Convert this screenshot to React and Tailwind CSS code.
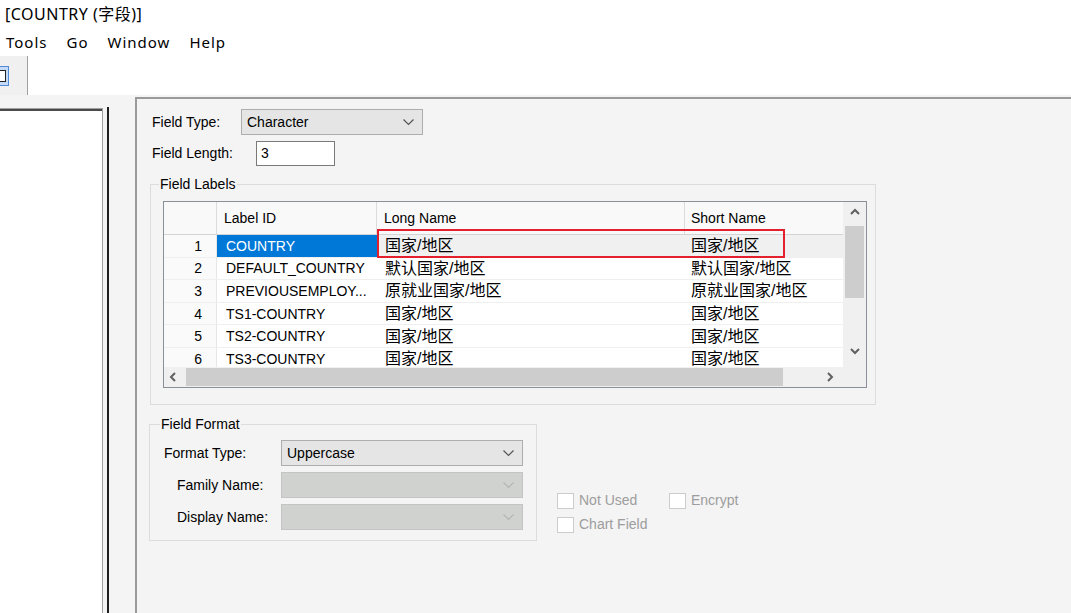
import React from 'react';

const rows = [
  { n: 1, id: 'COUNTRY', long: '国家/地区', short: '国家/地区' },
  { n: 2, id: 'DEFAULT_COUNTRY', long: '默认国家/地区', short: '默认国家/地区' },
  { n: 3, id: 'PREVIOUSEMPLOY...', long: '原就业国家/地区', short: '原就业国家/地区' },
  { n: 4, id: 'TS1-COUNTRY', long: '国家/地区', short: '国家/地区' },
  { n: 5, id: 'TS2-COUNTRY', long: '国家/地区', short: '国家/地区' },
  { n: 6, id: 'TS3-COUNTRY', long: '国家/地区', short: '国家/地区' },
];

function Chevron({ color = '#555555' }) {
  return (
    <svg width="11" height="7" viewBox="0 0 11 7">
      <polyline points="0.5,0.5 5.5,5.5 10.5,0.5" fill="none" stroke={color} strokeWidth="1.2" />
    </svg>
  );
}

// scrollbar arrow, dir: up | down | left | right
function Arrow({ dir }) {
  const pts = {
    up: '1,6 5,2 9,6',
    down: '1,2 5,6 9,2',
    left: '6,1 2,5 6,9',
    right: '3,1 7,5 3,9',
  }[dir];
  return (
    <svg width="10" height="10" viewBox="0 0 10 10">
      <polyline points={pts} fill="none" stroke="#606060" strokeWidth="2" />
    </svg>
  );
}

function Select({ value, width, disabled }) {
  return (
    <div
      className={`h-[26px] flex items-center justify-between pl-[5px] pr-[8px] border ${
        disabled ? 'bg-[#d0d2d0] border-[#c4c4c4]' : 'bg-[#e5e5e5] border-[#adadad]'
      }`}
      style={{ width }}
    >
      <span>{value}</span>
      <Chevron color={disabled ? '#b4b4b4' : '#555555'} />
    </div>
  );
}

function Checkbox({ label }) {
  return (
    <div className="flex items-center h-[17px]">
      <div className="w-[17px] h-[16px] bg-white border border-[#cccccc]" />
      <span className="ml-[5px] leading-[17px] text-[#9d9d9d]">{label}</span>
    </div>
  );
}

export default function App() {
  return (
    <div className="w-[1071px] h-[613px] overflow-hidden bg-white flex flex-col text-[14px] text-black font-['Liberation_Sans','Noto_Sans_CJK_SC',sans-serif]">
      {/* Title */}
      <div className="h-[28px] shrink-0 pl-[5px] flex items-center text-[16px] tracking-[0.5px] font-['Noto_Sans','Noto_Sans_CJK_SC',sans-serif]">
        [COUNTRY (字段)]
      </div>

      {/* Menu */}
      <div className="h-[28px] shrink-0 pl-[6px] flex items-center gap-[19px] text-[15px] tracking-[1px] font-['Noto_Sans',sans-serif]">
        <span>Tools</span>
        <span>Go</span>
        <span>Window</span>
        <span>Help</span>
      </div>

      {/* Toolbar */}
      <div className="h-[39px] shrink-0 flex">
        <div className="w-[28px] bg-[#f0f0f0] border-r border-[#a0a0a0] flex items-center">
          <div className="w-[9px] h-[20px] bg-[#c4daf6] border-y border-r border-[#4f8ad8] flex items-center">
            <div className="w-[6px] h-[12px] bg-white border-y border-r border-[#202020]" />
          </div>
        </div>
      </div>

      {/* Body */}
      <div className="flex-1 min-h-0 bg-[#f4f4f4] flex">
        {/* Left tree panel */}
        <div className="w-[135px] shrink-0 flex pt-[12px]">
          <div className="w-[103px] mt-[1px] bg-white border-t border-r border-[#a0a0a0]">
            <div className="h-full border-t-2 border-[#4a4a4a]" />
          </div>
          <div className="ml-[4px] w-[2px] bg-[#1e1e1e]" />
        </div>

        {/* Right detail panel */}
        <div className="flex-1 mt-[2px] border-l-2 border-t-2 border-[#9a9a9a]">
          <div className="pl-[15px] pt-[10px]">
            <div className="flex items-center h-[26px]">
              <span className="w-[89px]">Field Type:</span>
              <Select value="Character" width={182} />
            </div>
            <div className="flex items-center h-[25px] mt-[6px]">
              <span className="w-[104px]">Field Length:</span>
              <div className="w-[79px] h-[25px] bg-white border border-[#7a7a7a] pl-[4px] flex items-center">3</div>
            </div>
          </div>

          {/* Field Labels */}
          <fieldset className="ml-[13px] mt-[10px] w-[726px] border border-[#dcdcdc]">
            <legend className="ml-[8px] px-[1px] leading-[16px]">Field Labels</legend>
            <div className="mt-[9px] ml-[12px] mr-[8px] mb-[16px] h-[187px] border border-[#8b8f97] bg-white relative flex">
              <div className="w-[679px] flex flex-col">
                {/* header */}
                <div className="h-[33px] shrink-0 flex bg-[#f9f9f9] border-b border-[#d4d4d4]">
                  <div className="w-[53px] border-r border-[#dcdcdc]" />
                  <div className="w-[160px] border-r border-[#dcdcdc] pl-[7px] flex items-center">Label ID</div>
                  <div className="w-[308px] border-r border-[#dcdcdc] pl-[7px] flex items-center">Long Name</div>
                  <div className="flex-1 pl-[6px] flex items-center">Short Name</div>
                </div>
                {/* rows */}
                <div className="flex-1 min-h-0 overflow-hidden">
                  {rows.map((r) => (
                    <div
                      key={r.n}
                      className={`h-[22.6px] flex border-b border-[#efefef] ${r.n === 1 ? 'bg-[#f0f0f0]' : 'bg-white'}`}
                    >
                      <div className="w-[53px] bg-[#fafafa] border-r border-[#e6e6e6] pr-[14px] pt-[1px] flex items-center justify-end">
                        {r.n}
                      </div>
                      <div
                        className={`w-[160px] pl-[9px] pt-[1px] flex items-center whitespace-nowrap ${
                          r.n === 1 ? 'bg-[#0078d7] text-white' : 'bg-white'
                        }`}
                      >
                        {r.id}
                      </div>
                      <div className="w-[308px] pl-[8px] pt-[1px] flex items-center text-[16px] whitespace-nowrap">{r.long}</div>
                      <div className="flex-1 pl-[6px] pt-[1px] flex items-center text-[16px] whitespace-nowrap">{r.short}</div>
                    </div>
                  ))}
                </div>
                {/* horizontal scrollbar */}
                <div className="h-[20px] shrink-0 flex bg-[#f0f0f0]">
                  <div className="w-[20px] flex items-center justify-center">
                    <Arrow dir="left" />
                  </div>
                  <div className="ml-[2px] w-[597px] my-[1px] bg-[#cdcdcd]" />
                  <div className="flex-1" />
                  <div className="w-[22px] mr-[2px] flex items-center justify-center">
                    <Arrow dir="right" />
                  </div>
                </div>
              </div>
              {/* vertical scrollbar */}
              <div className="flex-1 flex flex-col bg-[#f0f0f0]">
                <div className="h-[22px] flex items-center justify-center">
                  <Arrow dir="up" />
                </div>
                <div className="mt-[2px] mx-[2px] h-[72px] bg-[#cdcdcd]" />
                <div className="flex-1" />
                <div className="h-[22px] mb-[4px] flex items-center justify-center">
                  <Arrow dir="down" />
                </div>
                <div className="h-[20px]" />
              </div>
              {/* annotation box */}
              <div className="absolute left-[213px] top-[27px] w-[408px] h-[29px] border-2 border-[#e5202e]" />
            </div>
          </fieldset>

          {/* Field Format + checkboxes */}
          <div className="flex items-end mt-[11px] ml-[12px]">
            <fieldset className="w-[388px] border border-[#dcdcdc]">
              <legend className="ml-[10px] px-[1px] leading-[16px]">Field Format</legend>
              <div className="pl-[14px] pr-[13px] pt-[8px] pb-[10px] flex flex-col gap-[6px]">
                <div className="flex items-center">
                  <span className="w-[117px] pt-[1px]">Format Type:</span>
                  <Select value="Uppercase" width={242} />
                </div>
                <div className="flex items-center pl-[13px]">
                  <span className="w-[104px]">Family Name:</span>
                  <Select value="" width={242} disabled />
                </div>
                <div className="flex items-center pl-[13px]">
                  <span className="w-[104px]">Display Name:</span>
                  <Select value="" width={242} disabled />
                </div>
              </div>
            </fieldset>
            <div className="ml-[20px] mb-[8px] flex flex-col gap-[7px]">
              <div className="flex">
                <div className="w-[112px]">
                  <Checkbox label="Not Used" />
                </div>
                <Checkbox label="Encrypt" />
              </div>
              <Checkbox label="Chart Field" />
            </div>
          </div>
        </div>
      </div>
    </div>
  );
}
